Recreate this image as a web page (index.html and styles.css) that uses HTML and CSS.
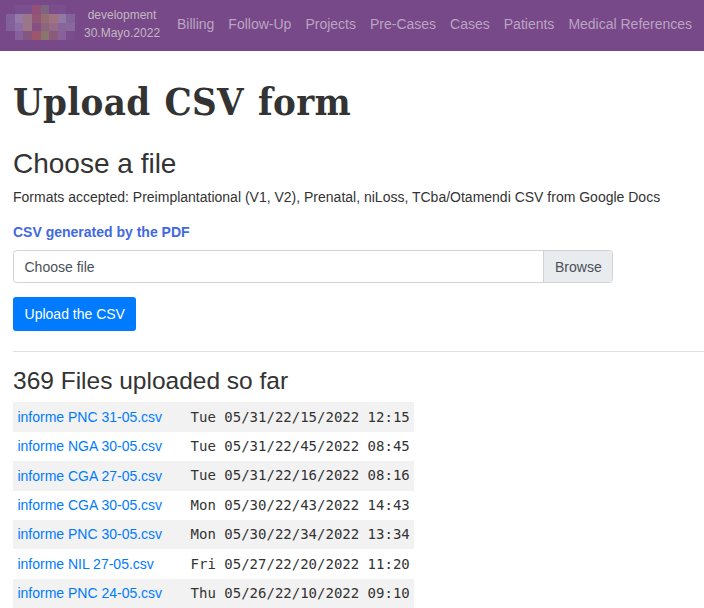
FILE: index.html
```html
<!DOCTYPE html>
<html lang="en">
<head>
<meta charset="utf-8">
<title>Upload CSV form</title>
<link rel="stylesheet" href="styles.css">
</head>
<body>
<nav class="navbar">
  <svg class="logo" width="69" height="35" viewBox="0 0 69 35" shape-rendering="crispEdges" aria-hidden="true">
    <path fill="#7a4f90" d="M9 0h17v9H9zM52 0h8v9h-8z"/>
    <path fill="#935078" d="M26 0h9v9h-9z"/><path fill="#7d6581" d="M35 0h8v9h-8z"/><path fill="#7b4d8d" d="M43 0h9v9h-9z"/>
    <path fill="#82609a" d="M0 9h9v17H0z"/><path fill="#957aa8" d="M9 9h8v9H9z"/><path fill="#9b7688" d="M17 9h9v17h-9z"/>
    <path fill="#925777" d="M26 9h9v9h-9z"/><path fill="#956e73" d="M35 9h8v9h-8z"/><path fill="#a17380" d="M43 9h9v9h-9z"/>
    <path fill="#9278a5" d="M52 9h8v9h-8z"/><path fill="#84629a" d="M60 9h9v9h-9z"/>
    <path fill="#8d6da3" d="M9 18h8v8H9z"/><path fill="#855083" d="M26 18h9v8h-9z"/><path fill="#8c667d" d="M35 18h8v8h-8z"/>
    <path fill="#946c8a" d="M43 18h9v8h-9z"/><path fill="#896399" d="M52 18h8v8h-8z"/><path fill="#87699c" d="M60 18h9v8h-9z"/>
    <path fill="#85609a" d="M9 26h8v9H9z"/><path fill="#85577f" d="M17 26h9v9h-9z"/><path fill="#9d576c" d="M26 26h9v9h-9z"/>
    <path fill="#8a766f" d="M35 26h8v9h-8z"/><path fill="#8c5a7b" d="M43 26h9v9h-9z"/><path fill="#87629a" d="M52 26h8v9h-8z"/>
    <path fill="#7b4c8c" d="M60 26h9v9h-9z"/>
  </svg>
  <div class="version">development<br>30.Mayo.2022</div>
  <div class="links">
    <a>Billing</a><a>Follow-Up</a><a>Projects</a><a>Pre-Cases</a><a>Cases</a><a>Patients</a><a>Medical References</a>
  </div>
</nav>
<main>
  <h1>Upload CSV form</h1>
  <h2>Choose a file</h2>
  <p class="formats">Formats accepted: Preimplantational (V1, V2), Prenatal, niLoss, TCba/Otamendi CSV from Google Docs</p>
  <div class="label">CSV generated by the PDF</div>
  <div class="file"><span class="file-name">Choose file</span><span class="browse">Browse</span></div>
  <button class="upload">Upload the CSV</button>
  <hr>
  <h3>369 Files uploaded so far</h3>
  <table>
    <tr><td class="name"><a>informe PNC 31-05.csv</a></td><td class="date">Tue 05/31/22/15/2022 12:15</td></tr>
    <tr><td class="name"><a>informe NGA 30-05.csv</a></td><td class="date">Tue 05/31/22/45/2022 08:45</td></tr>
    <tr><td class="name"><a>informe CGA 27-05.csv</a></td><td class="date">Tue 05/31/22/16/2022 08:16</td></tr>
    <tr><td class="name"><a>informe CGA 30-05.csv</a></td><td class="date">Mon 05/30/22/43/2022 14:43</td></tr>
    <tr><td class="name"><a>informe PNC 30-05.csv</a></td><td class="date">Mon 05/30/22/34/2022 13:34</td></tr>
    <tr><td class="name"><a>informe NIL 27-05.csv</a></td><td class="date">Fri 05/27/22/20/2022 11:20</td></tr>
    <tr><td class="name"><a>informe PNC 24-05.csv</a></td><td class="date">Thu 05/26/22/10/2022 09:10</td></tr>
  </table>
</main>
</body>
</html>
```
FILE: styles.css
```css
* { box-sizing: border-box; }
html { font-size: 14px; }
body {
  margin: 0;
  height: 608px;
  overflow: hidden;
  font: 14px/1.5 "Liberation Sans", sans-serif;
  color: #333;
  background: #fff;
}
.navbar {
  display: flex;
  align-items: flex-start;
  height: 51px;
  padding-left: 6px;
  background: #784988;
  white-space: nowrap;
}
.logo { flex: none; margin-top: 5px; }
.version {
  width: 76px;
  margin: 6px 0 0 9px;
  font-size: 12px;
  line-height: 18px;
  text-align: center;
  color: #c3b8c0;
}
.links { display: flex; gap: 14px; margin: 14px 0 0 17px; color: #bba4c3; }
main { padding-left: 13px; }
h1, h2, h3, p { margin: 0; }
h1 {
  padding-top: 25px;
  height: 96px;
  font: bold 38px/52px "DejaVu Serif Condensed", "DejaVu Serif", serif;
  letter-spacing: 0.3px;
  word-spacing: 2px;
  white-space: nowrap;
}
h2 { font-size: 28px; font-weight: 400; line-height: 34px; }
.formats { margin-top: 6px; }
.label { margin-top: 14px; font-weight: 700; color: #4169e1; }
.file {
  display: flex;
  width: 600px;
  height: 33px;
  margin-top: 7px;
  border: 1px solid #ced4da;
  border-radius: 3.5px;
  overflow: hidden;
  color: #495057;
  line-height: 32px;
}
.file-name { flex: 1; padding-left: 10.5px; }
.browse { width: 69px; padding-left: 11px; background: #e9ecef; border-left: 1px solid #ced4da; }
.upload {
  display: block;
  width: 123px;
  height: 34px;
  margin-top: 14px;
  padding: 0 0 0 0.5px;
  border: 0;
  border-radius: 3px;
  background: #007bff;
  color: #fff;
  font: inherit;
}
hr { margin: 20px 0 14px; border: 0; border-top: 1px solid #e0e0e0; }
h3 { font-size: 24.5px; font-weight: 400; line-height: 29.4px; }
table { width: 401px; margin-top: 7px; border-collapse: collapse; }
td { height: 29.4px; padding: 4.2px; line-height: 21px; }
tr:nth-child(odd) { background: #f2f2f2; }
td a { color: #007bff; }
.name { padding: 4.4px 4.2px 4px 4.4px; }
.date { width: 227.6px; font-family: "DejaVu Sans Mono", monospace; white-space: nowrap; }
```
